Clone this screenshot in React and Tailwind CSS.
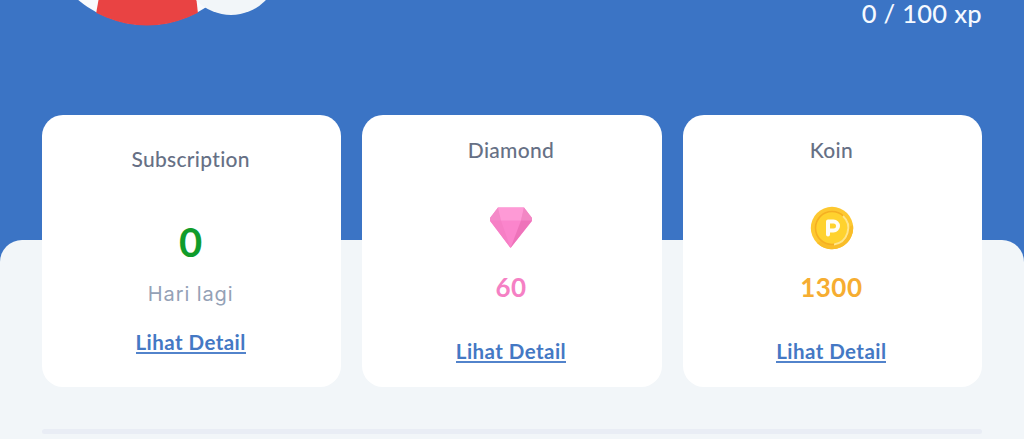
import React from 'react'

const Avatar = () => (
  <svg width="240" height="40" viewBox="60 0 240 40" className="shrink-0">
    <defs>
      <clipPath id="avatar">
        <circle cx="147" cy="-82" r="107.5" />
      </clipPath>
    </defs>
    <circle cx="147" cy="-82" r="107" fill="#f8fafd" />
    <path d="M98.500 0 L96 14 V30 H198 V14 L196.500 0 Z" fill="#e94343" clipPath="url(#avatar)" />
    <circle cx="231" cy="-33" r="48" fill="#f2f6f9" />
  </svg>
)

const DiamondIcon = () => (
  <svg width="42" height="42" viewBox="0 0 42 42">
    <path d="M8 0.500 H34 L42 11 V14 L20.500 41 L0 14 V11 Z" fill="#fb85cc" />
    <path d="M8 0.500 L11 13.500 H0 V11 Z" fill="#f48ac8" />
    <path d="M8 0.500 H34 L31 13.500 H11 Z" fill="#fe9ad6" />
    <path d="M34 0.500 L42 11 V13.500 H31 Z" fill="#f287c4" />
    <path d="M0 13.500 H11 L20.500 41 Z" fill="#f67fc5" />
    <path d="M31 13.500 H42 L20.500 41 Z" fill="#ee73ba" />
  </svg>
)

const CoinIcon = () => (
  <svg width="44" height="44" viewBox="0 0 44 44">
    <circle cx="22" cy="22" r="21.200" fill="#fdc830" />
    <path d="M7 37 A21.200 21.200 0 0 0 43 19 L37 22 Z" fill="#f9bd29" />
    <circle cx="22" cy="22" r="16.500" fill="#ffd22e" stroke="#f5af22" strokeWidth="1.600" />
    <path d="M33 10 A16.500 16.500 0 0 1 24 38.400" fill="none" stroke="#ffe68a" strokeWidth="2" />
    <path d="M18 28.500 V15.500 H23.500 A4.500 4.500 0 0 1 23.500 24.500 H18" fill="none" stroke="#fffdf5" strokeWidth="4" strokeLinecap="round" strokeLinejoin="round" />
  </svg>
)

const DetailLink = () => (
  <a
    href="#"
    className="h-[22px] border-b-2 border-[#5283cb] text-[20.500px] leading-[21px] font-bold tracking-[0.450px] whitespace-nowrap text-[#4478c4]"
  >
    Lihat Detail
  </a>
)

const Card = ({ title, children, className = '' }) => (
  <div className={`flex h-[272px] flex-1 flex-col items-center rounded-[21px] bg-white pr-[2px] ${className}`}>
    <h2 className="h-7 text-[21px] leading-7 font-medium tracking-[0.300px] whitespace-nowrap text-[#667085]">{title}</h2>
    {children}
  </div>
)

const App = () => {
  return (
    <div className="h-[439px] overflow-hidden bg-[#3b74c5] font-['Lato','Open_Sans',sans-serif] [font-variant-ligatures:none]">
      <header className="flex h-[240px] items-start justify-between pr-[42px] pl-[60px]">
        <Avatar />
        <p className="text-[25.500px] leading-[27px] font-medium tracking-[0.300px] text-[#f5f9ff]">0 / 100 xp</p>
      </header>

      <main className="h-[199px] rounded-t-[22px] bg-[#f2f6f9] px-[42px]">
        <div className="flex -translate-y-[125px] gap-[21px]">
          <Card title="Subscription" className="pt-[30px]">
            <p className="mt-[44px] h-[50px] text-[40px] leading-[50px] font-bold text-[#109c2b]">0</p>
            <p className="mt-[13px] h-7 font-['Inter'] text-[20px] leading-7 font-normal tracking-[0.900px] text-[#94a1b6]">
              Hari lagi
            </p>
            <div className="mt-[24px] flex">
              <DetailLink />
            </div>
          </Card>
          <Card title="Diamond" className="pt-[21px]">
            <div className="mt-[43px] flex h-11 pl-px">
              <DiamondIcon />
            </div>
            <p className="mt-[20px] h-8 text-[26px] leading-8 font-bold tracking-[0.300px] text-[#f580c4]">60</p>
            <div className="mt-[38px] flex">
              <DetailLink />
            </div>
          </Card>
          <Card title="Koin" className="pt-[21px]">
            <div className="mt-[42px] flex h-11 pl-[2px]">
              <CoinIcon />
            </div>
            <p className="mt-[21px] h-8 text-[26px] leading-8 font-bold tracking-[0.500px] text-[#f6ad31]">1300</p>
            <div className="mt-[38px] flex">
              <DetailLink />
            </div>
          </Card>
        </div>
        <div className="-mt-[83px] h-[5px] rounded-full bg-[#e9edf5]" />
      </main>
    </div>
  )
}

export default App
